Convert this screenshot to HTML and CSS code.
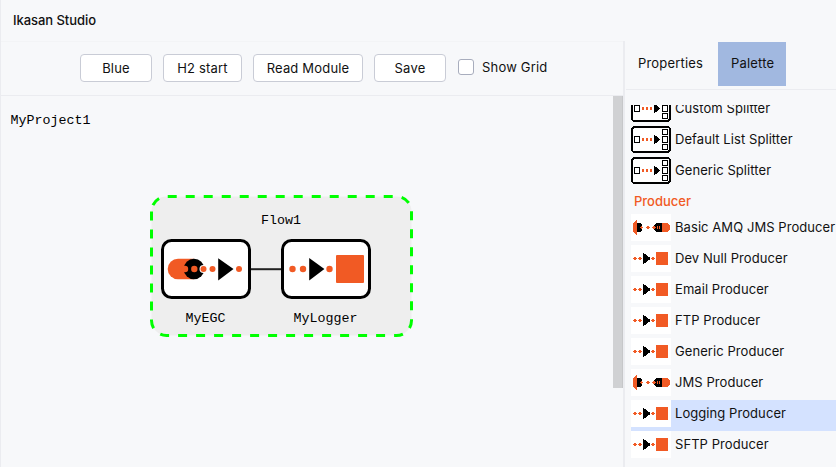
FILE: index.html
```
<!DOCTYPE html>
<html lang="en">
<head>
<meta charset="utf-8">
<title>Ikasan Studio</title>
<link rel="stylesheet" href="styles.css">
</head>
<body>
<svg class="defs" width="0" height="0" aria-hidden="true">
  <symbol id="splitter" viewBox="0 0 40 27">
    <rect x="1" y="1" width="38" height="25" rx="3" fill="#fff" stroke="#000" stroke-width="2"/>
    <path d="M3.5 10.5h5v6h-5zM31.5 3.5h5v5h-5zM31.5 10.5h5v6h-5zM31.5 18.5h5v5h-5z" fill="#fff" stroke="#000"/>
    <path d="M11 12h2v3h-2zM15 12h2v3h-2zM19 12h2v3h-2z" fill="#f15a24"/>
    <path d="M23 9h1v1h2v1h1v1h1v1h1v1h-1v1h-1v1h-1v1h-2v1h-1z"/>
  </symbol>
  <symbol id="endpoint" viewBox="0 0 40 27">
    <path d="M0 0h40v27H0z" fill="#fff"/>
    <path d="M25 7h12v13H25zM2 13h1v-1h2v1h1v1h-1v1h-2v-1h-1zM7 13h1v-1h2v1h1v1h-1v1h-2v-1h-1zM20 13h1v-1h2v1h1v1h-1v1h-2v-1h-1z" fill="#f15a24"/>
    <path d="M12 8h1v1h2v1h1v1h1v1h2v3h-2v1h-1v1h-1v1h-2v1h-1z"/>
  </symbol>
  <symbol id="jms" viewBox="0 0 40 27">
    <path d="M0 0h40v27H0z" fill="#fff"/>
    <path d="M2 9h1V8h1V7h1V6h1v15H5v-1H4v-1H3v-1H2zM30 9h7v1h1v1h1v5h-1v1h-1v1h-7z" fill="#f15a24"/>
    <path d="M6 9h4v1h1v7h-1v1H6zM25 9h6v9h-6v-1h-1v-1h-1v-1h-1v-3h1v-1h1v-1h1z"/>
    <path d="M9 13h1v-1h1v1h1v1h-1v1h-1v-1h-1zM15 13h1v-1h2v1h1v1h-1v1h-2v-1h-1zM21 13h1v-1h2v1h1v1h-1v1h-2v-1h-1zM26 12h1v3h-1zM28 12h1v3h-1z" fill="#f15a24"/>
  </symbol>
</svg>
<div class="app">
  <header class="title">Ikasan Studio</header>
  <div class="body">
    <main class="main">
      <div class="toolbar">
        <button class="btn">Blue</button>
        <button class="btn h2">H2 start</button>
        <button class="btn read">Read Module</button>
        <button class="btn">Save</button>
        <label class="check"><span class="box"></span>Show Grid</label>
      </div>
      <div class="canvas">
        <svg class="diagram" width="612" height="371" viewBox="1 96 612 371">
          <text x="10.5" y="124">MyProject1</text>
          <path class="flow" d="M151.5 211.5V320.5A15 15 0 0 0 166.5 335.5H396.5A15 15 0 0 0 411.5 320.5V211.5A15 15 0 0 0 396.5 196.5H166.5A15 15 0 0 0 151.5 211.5"/>
          <text x="261" y="224">Flow1</text>
          <path d="M251 269.2h30" stroke="#222" stroke-width="2"/>
          <rect class="node" x="162.5" y="240.5" width="87" height="57" rx="9"/>
          <rect class="node" x="282.5" y="240.5" width="87" height="57" rx="9"/>
          <path class="orange" d="M178 258.7h16v20.6h-16a10.3 10.3 0 0 1 0-20.6z"/>
          <circle cx="194" cy="269" r="10.3"/>
          <circle cx="203.5" cy="269" r="4" fill="#fff"/>
          <g class="orange">
            <circle cx="185" cy="269" r="3.2"/><circle cx="194.3" cy="269" r="3.2"/>
            <circle cx="203.5" cy="269" r="3"/><circle cx="212.5" cy="269" r="3"/><circle cx="239" cy="269" r="3"/>
            <circle cx="292.5" cy="269" r="3.2"/><circle cx="303" cy="269" r="3.2"/><circle cx="329.5" cy="269" r="3.2"/>
            <rect x="336" y="255" width="28" height="28" rx="1"/>
          </g>
          <path d="M218.2 258.2l15.3 10.8-15.3 11.5zM309.2 258l15.2 11-15.2 11.5z"/>
          <text x="185.5" y="322">MyEGC</text>
          <text x="293.5" y="322">MyLogger</text>
        </svg>
        <div class="scrollbar"></div>
      </div>
    </main>
    <aside class="side">
      <nav class="tabs"><span class="tab">Properties</span><span class="tab active">Palette</span></nav>
      <div class="list">
        <div class="row first"><svg><use href="#splitter"/></svg>Custom Splitter</div>
        <div class="row"><svg><use href="#splitter"/></svg>Default List Splitter</div>
        <div class="row"><svg><use href="#splitter"/></svg>Generic Splitter</div>
        <div class="group">Producer</div>
        <div class="row"><svg><use href="#jms"/></svg>Basic AMQ JMS Producer</div>
        <div class="row"><svg><use href="#endpoint"/></svg>Dev Null Producer</div>
        <div class="row"><svg><use href="#endpoint"/></svg>Email Producer</div>
        <div class="row"><svg><use href="#endpoint"/></svg>FTP Producer</div>
        <div class="row"><svg><use href="#endpoint"/></svg>Generic Producer</div>
        <div class="row"><svg><use href="#jms"/></svg>JMS Producer</div>
        <div class="row selected"><svg><use href="#endpoint"/></svg>Logging Producer</div>
        <div class="row"><svg><use href="#endpoint"/></svg>SFTP Producer</div>
      </div>
    </aside>
  </div>
</div>
</body>
</html>
```
FILE: styles.css
```
* { box-sizing: border-box; }
body { margin: 0; background: #f7f8fa; color: #111; font: 13px/18px Inter, sans-serif; letter-spacing: .18px; }
.defs { display: block; }
.app { height: 467px; display: flex; flex-direction: column; border-left: 1px solid #ebecf0; overflow: hidden; white-space: nowrap; }
.title { height: 41px; padding: 11px 12px; font-weight: 500; letter-spacing: -.05px; }
.body { flex: 1; display: flex; min-height: 0; }
.main { width: 624px; border-right: 2px solid #ebecf0; display: flex; flex-direction: column; }
.toolbar { height: 55px; padding: 12px 0 0 79px; display: flex; gap: 11px; align-items: flex-start; border-top: 1px solid #f3f4f6; border-bottom: 1px solid #ebecf0; }
.btn { width: 72px; height: 28px; padding: 0; border: 1px solid #c9ccd6; border-radius: 4px; background: #fff; color: #111; font: inherit; letter-spacing: inherit; }
.btn.h2 { width: 79px; }
.btn.read { width: 110px; }
.check { display: flex; align-items: center; gap: 8px; height: 26px; margin-left: 1px; }
.box { width: 16px; height: 16px; border: 1px solid #a8adbd; border-radius: 3px; background: #fff; }
.canvas { flex: 1; display: flex; }
.diagram { display: block; letter-spacing: 0; }
.diagram text { font: 13.33px "Liberation Mono", monospace; fill: #000; }
.flow { fill: #eee; stroke: #0f0; stroke-width: 3; stroke-dasharray: 9; }
.node { fill: #fff; stroke: #000; stroke-width: 3; }
.orange { fill: #f15a24; }
.scrollbar { width: 10px; height: 292px; background: #d0d1d3; border-right: 1px solid #c6c7c9; }
.side { flex: 1; min-width: 0; display: flex; flex-direction: column; }
.tabs { height: 49px; padding-top: 1px; display: flex; margin-left: 1px; border-bottom: 1px solid #ebecf0; }
.tab { height: 44px; padding: 12px 12px 0; width: 92px; }
.tab.active { width: 68px; background: #a1b8e0; padding-left: 13px; }
.list { flex: 1; min-height: 0; margin: 15px 0 0 6px; overflow: hidden; letter-spacing: .07px; }
.row { height: 31px; display: flex; gap: 4px; line-height: 27px; }
.row svg { width: 40px; height: 27px; flex: none; shape-rendering: crispEdges; }
.row.first { margin-top: -10px; }
.row.selected { background: #d4e2ff; }
.group { height: 26px; padding-left: 3px; line-height: 27px; font-weight: 500; color: #f15a24; letter-spacing: 0; }
```
